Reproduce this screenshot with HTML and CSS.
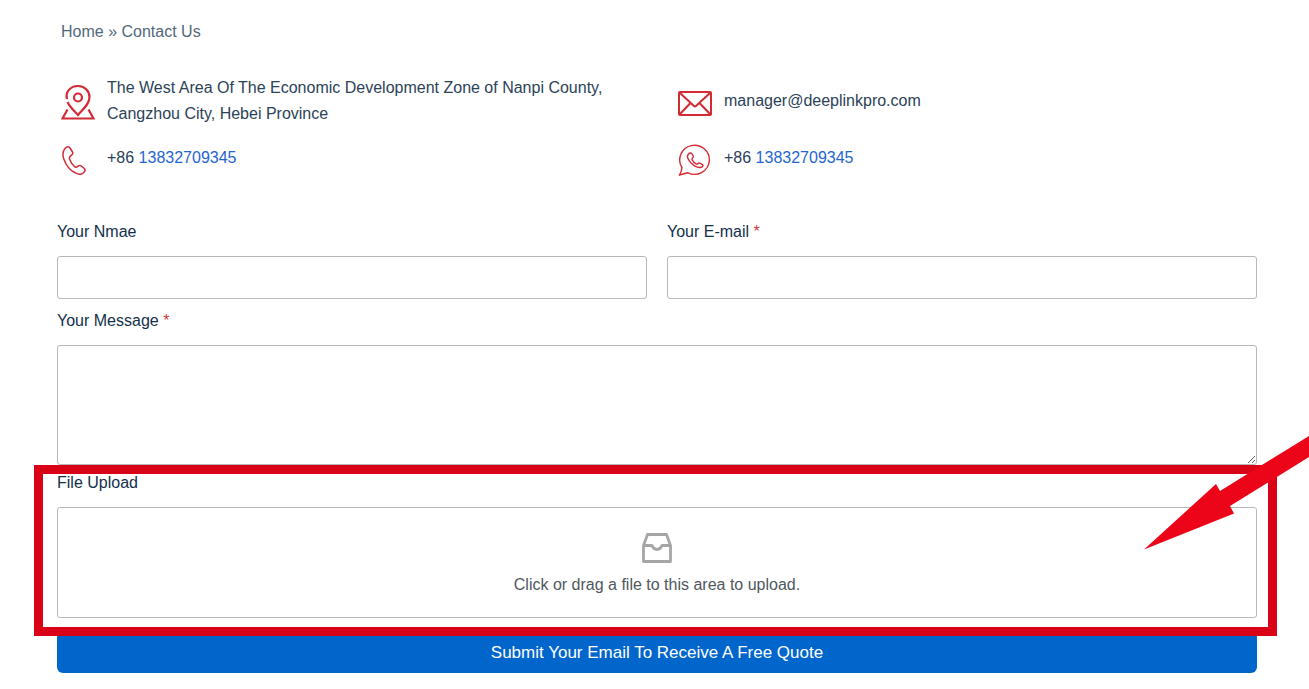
FILE: index.html
```html
<!DOCTYPE html>
<html lang="en">
<head>
    <meta charset="UTF-8">
    <meta name="viewport" content="width=device-width, initial-scale=1.0">
    <title>Contact Us</title>
    <link rel="stylesheet" href="styles.css">
</head>
<body>
    <nav class="breadcrumb">
        <a href="#">Home</a> » <span>Contact Us</span>
    </nav>

    <section class="contacts">
        <div class="contact">
            <svg class="contact-icon" viewBox="0 0 34 36" fill="none" stroke="#d42a35" stroke-width="2.2">
                <path d="M6 15C4 8 9.500 2 17 2c6.500 0 11.500 4.800 11.500 11 0 7.500-7 12.500-11.500 18C13.500 27 9 23.500 6.500 18"/>
                <circle cx="17" cy="13.500" r="4"/>
                <path d="M6.500 25.500 1.500 34.500h31L27.500 25.500"/>
            </svg>
            <p>The West Area Of The Economic Development Zone of Nanpi County, Cangzhou City, Hebei Province</p>
        </div>
        <div class="contact">
            <svg class="contact-icon" viewBox="0 0 34 36" fill="none" stroke="#d42a35" stroke-width="2" stroke-linejoin="round">
                <rect x="1" y="8" width="32" height="23" rx="1"/>
                <path d="M1.500 8.500 16 22q1 1 2 0L32.500 8.500M1.500 30.500 12.500 19M32.500 30.500 21.500 19"/>
            </svg>
            <p>manager@deeplinkpro.com</p>
        </div>
        <div class="contact">
            <svg class="contact-icon" viewBox="0 0 34 36" fill="none" stroke="#d42a35" stroke-width="1.500" stroke-linejoin="round">
                <path d="M4 7.500C5.500 5.500 8 5 9 7l2.500 4c.700 1.300.3 2-.7 2.800-2 1.500-3 2-2.300 4.200 1.200 3.500 3 6 5.500 8 2 .800 2.500-.7 4-1.400.8-.3 1.500-.2 2.300.4l3 2.500c1 1 1 2 .2 3.200-2 3.300-6 3-9.500 1C9 29.500 5.500 25 3 18.500 1.500 14.500 1.500 10.500 4 7.500Z"/>
            </svg>
            <p>+86 <a href="tel:+8613832709345">13832709345</a></p>
        </div>
        <div class="contact">
            <svg class="contact-icon" viewBox="0 0 34 36" fill="none" stroke="#d42a35" stroke-width="1.400" stroke-linejoin="round">
                <path d="M4 26.500A14.800 14.500 0 1 1 10 31.800Q6 32.500 1.300 34.200Q3.500 31 4 26.500Z"/>
                <path d="M10.500 13c1.500-1.600 3-1.200 3.700.2l1 1.800c.5 1-.1 1.600-.8 2.200-.8.700-.5 1.300-.1 2 1 1.800 2.300 3 4 3.800.8.400 1.300 0 1.800-.5.700-.7 1.400-.6 2.200-.1l1.800 1c1.200.700 1 1.500.3 2.200-2 1.700-5 .800-7.900-.800-3-1.700-5.300-4.300-6.600-7.300-.7-1.600-.6-3.300.6-4.500Z"/>
            </svg>
            <p>+86 <a href="tel:+8613832709345">13832709345</a></p>
        </div>
    </section>

    <form class="quote-form">
        <div class="form-row">
            <div class="field">
                <label for="name">Your Nmae</label>
                <input type="text" id="name" name="name">
            </div>
            <div class="field">
                <label for="email">Your E-mail <span class="required">*</span></label>
                <input type="email" id="email" name="email" required>
            </div>
        </div>
        <div class="field">
            <label for="message">Your Message <span class="required">*</span></label>
            <textarea id="message" name="message" required></textarea>
        </div>
        <div class="field upload">
            <label for="file">File Upload</label>
            <label class="dropzone" for="file">
                <svg class="inbox-icon" viewBox="0 0 30 30" fill="none" stroke="#a6a6a6" stroke-width="2.800" stroke-linejoin="round">
                    <path d="M1.500 12.500 5.500 1.500h19l4 11v16h-27Z"/>
                    <path d="M1.500 12.500h8.500c1 2.500 2.700 4 5 4s4-1.500 5-4h8.500"/>
                </svg>
                <span>Click or drag a file to this area to upload.</span>
            </label>
            <input class="file-input" type="file" id="file" name="file">
            <div class="highlight"></div>
            <svg class="arrow" viewBox="0 0 165 114">
                <path fill="#ec0518" d="M0 113.500 72 48 76 55 165 0V21L86 70 90 77.500Z"/>
            </svg>
        </div>
        <button class="submit" type="submit">Submit Your Email To Receive A Free Quote</button>
    </form>
</body>
</html>
```
FILE: styles.css
```css
* {
    box-sizing: border-box;
}
body {
    margin: 0;
    padding: 19px 52px 16px 57px;
    background: #fff;
    color: #2b4257;
    font-family: "Liberation Sans", Arial, sans-serif;
    font-size: 16px;
    line-height: 26px;
    overflow-x: hidden;
}
p {
    margin: 0;
}
a {
    color: #1f66d1;
    text-decoration: none;
}
.breadcrumb {
    padding-left: 4px;
    color: #52677a;
}
.breadcrumb a {
    color: inherit;
}

/* contact details */
.contacts {
    display: grid;
    grid-template-columns: 1fr 1fr;
    gap: 18px 38px;
    margin-top: 30px;
    padding-left: 4px;
}
.contact {
    display: flex;
    align-items: center;
    gap: 12px;
}
.contact-icon {
    flex: none;
    width: 34px;
    height: 36px;
    margin: -4px 0 -6px;
}

/* form */
.quote-form {
    margin-top: 48px;
    color: #12304a;
}
.form-row {
    display: grid;
    grid-template-columns: 1fr 1fr;
    gap: 20px;
    margin-bottom: 9px;
}
.field {
    display: flex;
    flex-direction: column;
    gap: 11px;
}
.required {
    color: #d63637;
}
.field input,
.field textarea,
.dropzone {
    width: 100%;
    border: 1px solid #b8b8b8;
    border-radius: 3px;
    background: #fff;
    font: inherit;
}
.field input {
    height: 43px;
    padding: 0 12px;
}
.field textarea {
    display: block;
    height: 120px;
    padding: 8px 12px;
    resize: vertical;
}
.upload {
    position: relative;
    margin-top: 5px;
}
.dropzone {
    display: flex;
    flex-direction: column;
    align-items: center;
    gap: 9px;
    padding: 25px 12px 19px;
    color: #50575e;
    cursor: pointer;
}
.inbox-icon {
    width: 30px;
    height: 30px;
}
.field .file-input {
    position: absolute;
    bottom: 0;
    width: 1px;
    height: 1px;
    padding: 0;
    opacity: 0;
}

/* red frame and arrow pointing at the upload area */
.highlight {
    position: absolute;
    top: -5px;
    right: -20px;
    bottom: -18px;
    left: -23px;
    border: 9px solid #d90217;
    pointer-events: none;
}
.arrow {
    position: absolute;
    top: -34px;
    right: -52px;
    width: 165px;
    height: 114px;
    pointer-events: none;
}
.submit {
    display: block;
    width: 100%;
    height: 42px;
    margin-top: 13px;
    padding: 2px 0 0;
    border: 0;
    border-radius: 6px;
    background: #0066cc;
    color: #fff;
    font: inherit;
    font-size: 17px;
    cursor: pointer;
}
```
